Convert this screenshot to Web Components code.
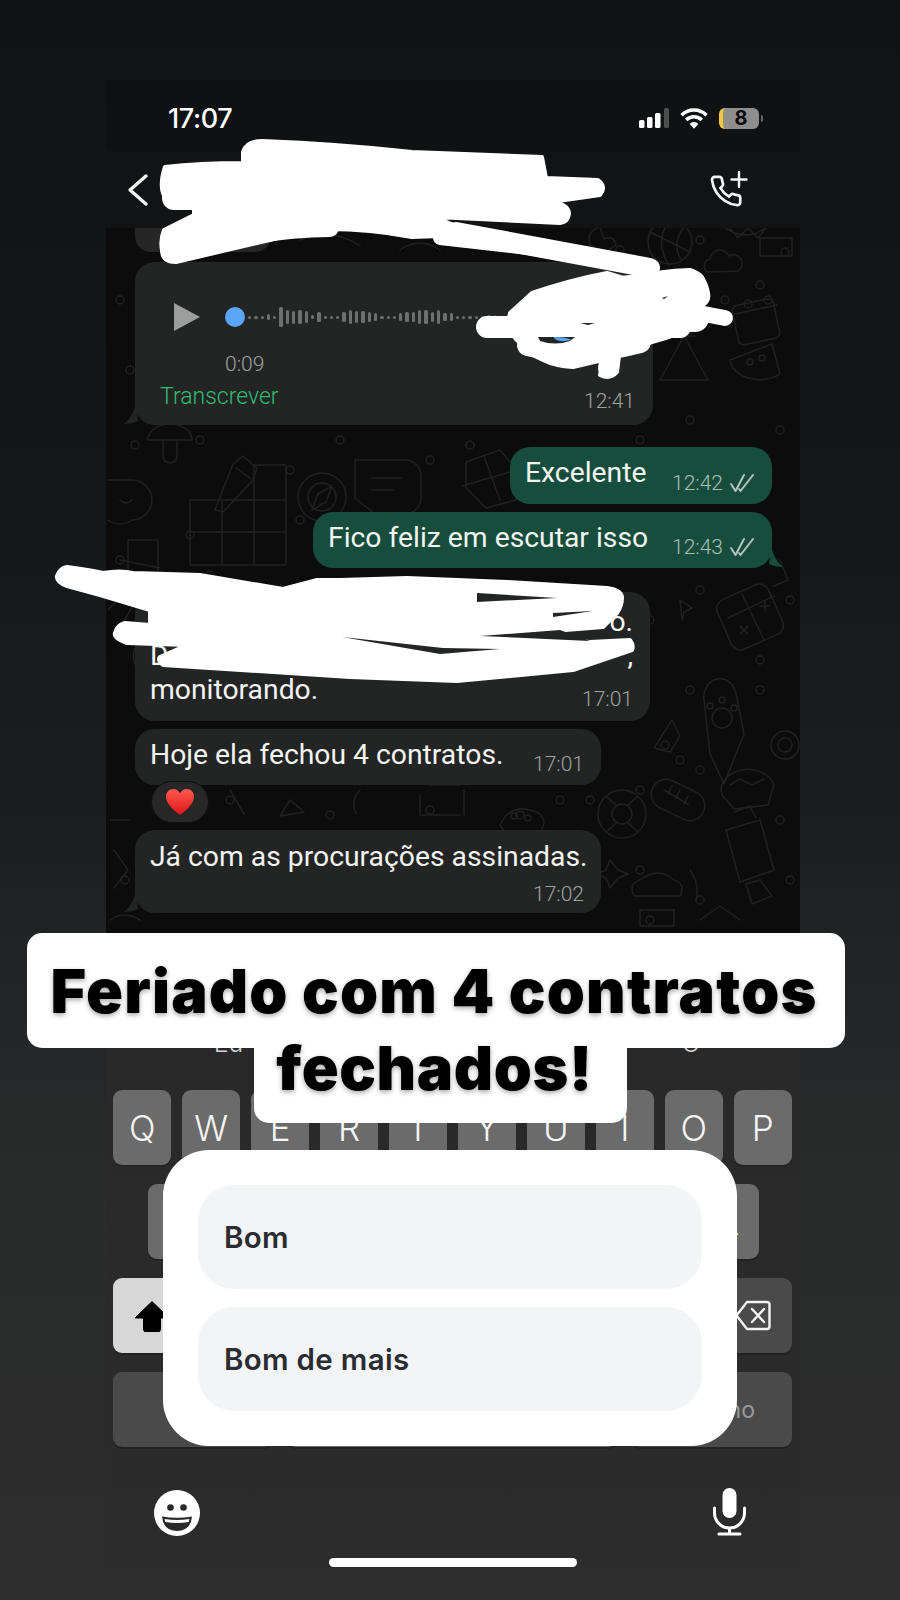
<!DOCTYPE html>
<html lang="pt-BR">
<head>
<meta charset="utf-8">
<title>Feriado com 4 contratos fechados</title>
<style>
    html, body { margin: 0; background: #101314; }
    story-page { font-family: Inter, "Liberation Sans", sans-serif; }
</style>
</head>
<body>
<story-page>
    <phone-screen>
        <status-bar time="17:07"></status-bar>
        <chat-header></chat-header>
        <chat-view>
            <div class="stub" style="flex:none;width:136px;height:24px;background:#262626;border-radius:0 0 16px 16px"></div>
            <audio-bubble time="12:41" duration="0:09" action="Transcrever" style="margin-top:10px"></audio-bubble>
            <chat-bubble out time="12:42" style="margin-top:22px;width:262px;--h:57px">Excelente</chat-bubble>
            <chat-bubble out tail time="12:43" style="margin-top:8px;width:459px">Fico feliz em escutar isso</chat-bubble>
            <chat-bubble stacked time="17:01" style="margin-top:24px;width:515px;--top:13px;--mt:-18px;--bot:12px">
                <div style="display:flex;justify-content:space-between;height:34px"><span>Ho</span><span>o.</span></div>
                <div style="display:flex;justify-content:space-between;height:34px"><span>D</span><span style="margin-left:290px">porqu</span><span>,</span></div>
                <div style="height:34px">monitorando.</div>
            </chat-bubble>
            <chat-bubble time="17:01" style="margin-top:8px;width:466px">Hoje ela fechou 4 contratos.</chat-bubble>
            <heart-reaction></heart-reaction>
            <chat-bubble stacked tail time="17:02" style="width:466px;--top:10px;--mt:10px;--bot:9px">Já com as procurações assinadas.</chat-bubble>
        </chat-view>
        <ios-keyboard></ios-keyboard>
    </phone-screen>
    <scribble-layer></scribble-layer>
    <story-sticker first="Feriado com 4 contratos" second="fechados!"></story-sticker>
    <poll-card>
        <poll-option>Bom</poll-option>
        <poll-option>Bom de mais</poll-option>
    </poll-card>
</story-page>

<script>
class StoryPage extends HTMLElement {
    constructor() {
        super();
        this.attachShadow({mode: 'open'}).innerHTML = `
            <style>
                :host {
                    display: block;
                    position: relative;
                    width: 900px;
                    height: 1600px;
                    overflow: hidden;
                    background: linear-gradient(#101314 0, #15181a 500px, #1b1d1e 800px, #242526 1000px, #2a2b2b 1200px, #2d2d2d 1600px);
                }
            </style>
            <slot></slot>`;
    }
}

class PhoneScreen extends HTMLElement {
    constructor() {
        super();
        this.attachShadow({mode: 'open'}).innerHTML = `
            <style>
                :host {
                    display: block;
                    width: 694px;
                    margin-left: 106px;
                    padding-top: 80px;
                }
            </style>
            <slot></slot>`;
    }
}

class StatusBar extends HTMLElement {
    constructor() {
        super();
        this.attachShadow({mode: 'open'}).innerHTML = `
            <style>
                :host {
                    display: flex;
                    align-items: center;
                    justify-content: space-between;
                    box-sizing: border-box;
                    height: 70px;
                    padding: 0 37px 0 62px;
                    background: #0f1112;
                    color: #fff;
                }
                .time { font-size: 27px; font-weight: 500; letter-spacing: -.4px; margin-top: 6px; }
                .icons { display: flex; align-items: center; gap: 11px; margin-top: 6px; }
                svg { display: block; }
                .batt { display: flex; align-items: center; gap: 2px; }
                .cell {
                    box-sizing: border-box;
                    width: 40px;
                    height: 21px;
                    border-radius: 6px;
                    border-left: 4px solid #f2c93b;
                    background: #8e8e8e;
                    color: #0a0a0a;
                    font-size: 20px;
                    font-weight: 700;
                    line-height: 21px;
                    text-align: center;
                }
                .nub { width: 2px; height: 7px; background: #666; border-radius: 0 2px 2px 0; }
            </style>
            <span class="time">${this.getAttribute('time')}</span>
            <div class="icons">
                <svg width="30" height="20" viewBox="0 0 30 20">
                    <rect x="0" y="12" width="5.500" height="8" rx="1.500" fill="#fff"/>
                    <rect x="8" y="9" width="5.500" height="11" rx="1.500" fill="#fff"/>
                    <rect x="16" y="5" width="5.500" height="15" rx="1.500" fill="#fff"/>
                    <rect x="25" y="0" width="5" height="20" rx="1.500" fill="#4d4f4f"/>
                </svg>
                <svg width="28" height="21" viewBox="0 0 27 20" fill="none" stroke="#fff" stroke-width="3.400">
                    <path d="M1.500 6.800a17 17 0 0 1 24 0"/>
                    <path d="M6 11.400a10.600 10.600 0 0 1 15 0"/>
                    <path d="M13.500 19.800l-4.200-4.600a6 6 0 0 1 8.400 0z" fill="#fff" stroke="none"/>
                </svg>
                <div class="batt"><div class="cell">8</div><div class="nub"></div></div>
            </div>`;
    }
}

class ChatHeader extends HTMLElement {
    constructor() {
        super();
        this.attachShadow({mode: 'open'}).innerHTML = `
            <style>
                :host {
                    display: flex;
                    align-items: flex-start;
                    justify-content: space-between;
                    box-sizing: border-box;
                    height: 78px;
                    padding: 21px 52px 0 21px;
                    background: #111314;
                }
                svg { display: block; }
            </style>
            <svg width="22" height="34" viewBox="0 0 22 34" fill="none" stroke="#f4f4f4" stroke-width="3.400" stroke-linecap="round" stroke-linejoin="round" style="margin-top:2px">
                <path d="M19 3L3 17l16 14"/>
            </svg>
            <svg width="38" height="38" viewBox="0 0 38 38" fill="none" stroke="#f4f4f4" stroke-width="2.400" stroke-linecap="round">
                <g transform="translate(-1 3) scale(1.42)">
                    <path stroke-width="1.900" d="M22 16.920v3a2 2 0 0 1-2.180 2 19.790 19.790 0 0 1-8.630-3.070 19.500 19.500 0 0 1-6-6 19.790 19.790 0 0 1-3.070-8.670A2 2 0 0 1 4.110 2h3a2 2 0 0 1 2 1.720 12.840 12.840 0 0 0 .7 2.810 2 2 0 0 1-.45 2.110L8.090 9.910a16 16 0 0 0 6 6l1.270-1.270a2 2 0 0 1 2.110-.45 12.840 12.840 0 0 0 2.810.7A2 2 0 0 1 22 16.920z"/>
                </g>
                <path d="M29 1v15M21.500 8.500h15"/>
            </svg>`;
    }
}

class ChatView extends HTMLElement {
    constructor() {
        super();
        // small dots and doodles of the wallpaper, in page coordinates
        const dots = [[150,240],[620,250],[700,240],[785,252],[665,300],[725,300],[690,330],[760,285],[130,370],[120,300],[690,420],[780,430],[640,440],
            [135,445],[200,440],[340,440],[430,460],[470,445],[120,560],[190,535],[210,575],[300,520],[290,470],[650,620],[655,560],[700,590],[790,600],[760,660],
            [690,690],[760,690],[665,745],[680,760],[700,770],[640,790],[230,800],[330,815],[430,810],[520,815],[590,800],[560,800],[780,820],[790,880],[640,870],[700,900],[650,920],[125,880]];
        const grid = [];
        for (let i = 0; i <= 3; i++) grid.push(`M${190 + i * 32} 500V565`);
        grid.push('M190 500H286M190 532H286M190 565H286M254 465H286V500M254 465V500');
        this.attachShadow({mode: 'open'}).innerHTML = `
            <style>
                :host {
                    display: flex;
                    flex-direction: column;
                    align-items: flex-start;
                    position: relative;
                    box-sizing: border-box;
                    height: 705px;
                    padding: 0 28px 0 29px;
                    background: #0c0c0c;
                    overflow: hidden;
                }
                svg { position: absolute; left: 0; top: 0; }
                ::slotted(*) { position: relative; }
            </style>
            <svg width="694" height="705" viewBox="106 228 694 705" fill="none" stroke="#212121" stroke-width="1.500" stroke-linecap="round" stroke-linejoin="round">
                ${dots.map(d => `<circle cx="${d[0]}" cy="${d[1]}" r="4"/>`).join('')}
                <circle cx="670" cy="242" r="22"/><path d="M650 232q20 10 40 20M670 220q-16 20-2 44M685 226q-14 16-4 34"/>
                <path d="M708 272a7 7 0 0 1 2-13 10 10 0 0 1 19-3 8 8 0 0 1 9 15z"/>
                <path d="M725 228q24 14 40 0M730 228l8 10 10-10 10 10 8-10"/>
                <rect x="735" y="302" width="42" height="40" rx="5" transform="rotate(-12 755 322)"/><path d="M735 314l42-9"/><circle cx="748" cy="304" r="4"/><circle cx="768" cy="300" r="4"/>
                <path d="M660 380l24-44 24 44zM672 336h24"/>
                <path d="M730 360a30 22 0 0 0 50 14l-8-30z"/><circle cx="750" cy="362" r="3"/><circle cx="762" cy="358" r="3"/>
                <path d="M760 238h32v18h-32z"/>
                <path d="M148 440h44a22 16 0 0 0-44 0zM163 440v16a7 7 0 0 0 14 0v-16"/>
                <path d="M215 510l18-46 10-8 14 12-4 12-30 32zM236 468l14 10"/>
                <path d="M108 480h24a20 20 0 0 1 0 40 20 20 0 0 1-24 0"/><path d="M120 500q6 6 12 0"/>
                <path d="${grid.join('')}"/>
                <path d="M120 560l40 8M108 610l14-14 12 8-12 20M150 590q20-6 30 10"/>
                <circle cx="322" cy="497" r="24"/><circle cx="322" cy="497" r="14"/><path d="M332 486l-14 8-6 16 14-8z"/>
                <path d="M355 460h50a16 16 0 0 1 16 16v22a16 16 0 0 1-16 16h-30l-20-16z"/><path d="M372 478h30M372 490h22"/>
                <path d="M466 462l34-12 24 28-8 22-30 8-20-20z"/><path d="M484 456l16 44M462 486l48-14"/>
                <path d="M168 670a20 20 0 1 0-1 1zM128 540h30v34h-30z"/>
                <rect x="722" y="590" width="56" height="54" rx="10" transform="rotate(-24 750 617)"/><path d="M728 618l46-22M742 594l22 46M760 606h10M765 601v10M740 626l8 8M748 626l-8 8"/>
                <path d="M680 600l12 8-8 4-2 8z"/>
                <path d="M704 700a16 18 0 0 1 32-6l8 40-20 50-14-30z"/><circle cx="722" cy="718" r="10"/><circle cx="710" cy="706" r="3"/><circle cx="722" cy="700" r="3"/><circle cx="734" cy="708" r="3"/>
                <circle cx="785" cy="745" r="14"/><circle cx="785" cy="745" r="7"/>
                <rect x="650" y="785" width="56" height="30" rx="15" transform="rotate(26 678 800)"/><path d="M664 790l24 14M672 786l-4 8M680 790l-4 8M688 796l-4 8"/>
                <path d="M722 795a26 20 0 0 1 52-10l-6 20-34 4z"/><path d="M730 785l10-6 12 6 12-6"/>
                <path d="M672 720l8 16-10 16-16-4z"/>
                <circle cx="622" cy="814" r="24"/><circle cx="622" cy="814" r="10"/><path d="M606 796l10 9M638 796l-10 9M606 832l10-9M638 832l-10-9"/>
                <path d="M726 830l34-10 14 50-34 12zM734 812l16-6 6 12"/>
                <path d="M500 825q10-22 34-14 16 6 6 22-34 6-40-8z"/><circle cx="514" cy="816" r="3"/><circle cx="528" cy="818" r="3"/>
                <path d="M420 795v20h40M430 785h30M464 790v25"/>
                <path d="M640 880q18-14 34 0 12 4 6 16h-46q-6-12 6-16zM690 870q10 14 6 30M760 880l12 16-20 8-6-20z"/>
                <path d="M610 860l8 10 10 4-10 4-8 10-4-10-10-4 10-4z"/>
                <path d="M290 800l-10 16 24-4zM230 790l14 24M360 790q-10 10-4 24"/>
                <path d="M640 910h34v16h-34zM700 920l20-14 20 14"/>
                <path d="M560 460l12 10-8 16M620 690l22 20M640 704l-10 14M780 560l8 20-14 6"/>
                <path d="M590 245q-4-14 10-18l4 12q10-4 12 6l-12 8z"/>
                <path d="M110 820h20M114 850l14 20-14 18M110 920q14-10 30 0"/>
                <path d="M300 240q30-14 60 6M400 250q20-14 40 0M480 240l24 8"/>
            </svg>
            <slot></slot>`;
    }
}

class ChatBubble extends HTMLElement {
    constructor() {
        super();
        const out = this.hasAttribute('out');
        const ticks = out ? `<svg width="26" height="20" viewBox="0 0 26 20" fill="none" stroke="#b4c5bd" stroke-width="2" stroke-linecap="round" stroke-linejoin="round">
                <path d="M2 11l4.500 7L15 2M10 16l1.500 2L24 2"/></svg>` : '';
        const tail = !this.hasAttribute('tail') ? '' : out
            ? `<svg class="tail" style="right:-11px" width="14" height="22" viewBox="0 0 14 22"><path d="M2 0Q5 14 14 21Q6 21 0 18z" fill="#174d3c"/></svg>`
            : `<svg class="tail" style="left:-11px" width="14" height="22" viewBox="0 0 14 22"><path d="M12 0Q9 14 0 21Q8 21 14 18z" fill="#232524"/></svg>`;
        this.attachShadow({mode: 'open'}).innerHTML = `
            <style>
                :host {
                    display: block;
                    flex: none;
                    box-sizing: border-box;
                    font-family: Roboto, "Liberation Sans", sans-serif;
                    font-size: 28.300px;
                    color: #f4f4f2;
                    --bg: #232524;
                    --meta: #a0a2a1;
                }
                :host([out]) {
                    align-self: flex-end;
                    --bg: #174d3c;
                    --meta: #a8beb5;
                }
                .b {
                    position: relative;
                    display: flex;
                    align-items: flex-end;
                    justify-content: space-between;
                    box-sizing: border-box;
                    min-height: var(--h, 56px);
                    padding: 9px 17px 11px 15px;
                    background: var(--bg);
                    border-radius: 20px;
                    line-height: 34px;
                    white-space: nowrap;
                }
                :host([stacked]) .b { display: block; padding: var(--top) 17px var(--bot) 15px; }
                :host([stacked]) .meta { justify-content: flex-end; margin-top: var(--mt); }
                .text { align-self: flex-start; }
                .meta {
                    display: flex;
                    align-items: center;
                    gap: 6px;
                    font-size: 21px;
                    font-weight: 300;
                    line-height: 20px;
                    color: var(--meta);
                }
                .tail { position: absolute; bottom: 0; }
            </style>
            <div class="b">
                <div class="text"><slot></slot></div>
                <div class="meta"><span>${this.getAttribute('time')}</span>${ticks}</div>
                ${tail}
            </div>`;
    }
}

class AudioBubble extends HTMLElement {
    constructor() {
        super();
        const bars = [3,3,3,6,3,20,14,13,14,12,4,10,3,3,3,10,14,12,12,10,8,3,3,3,8,10,10,14,14,10,14,8,8,3,3,3,3,3,4,4];
        this.attachShadow({mode: 'open'}).innerHTML = `
            <style>
                :host {
                    display: block;
                    flex: none;
                    box-sizing: border-box;
                    position: relative;
                    width: 518px;
                    height: 163px;
                    padding-top: 41px;
                    background: #232524;
                    border-radius: 20px;
                    color: #a0a2a1;
                    font-family: Roboto, "Liberation Sans", sans-serif;
                }
                .row { display: flex; align-items: center; height: 28px; padding-left: 39px; }
                .dot { width: 20px; height: 20px; border-radius: 50%; background: #5aa5f5; margin: 0 3px 0 25px; flex: none; }
                .wave { display: flex; align-items: center; gap: 3px; }
                .wave i { display: block; width: 3.300px; background: #6e706f; border-radius: 1.500px; }
                .dur { margin: 23px 0 0 90px; font-size: 21px; font-weight: 300; line-height: 20px; }
                .foot { display: flex; justify-content: space-between; align-items: flex-end; padding: 0 18px 0 25px; margin-top: 9px; }
                .act { color: #2fbb74; font-size: 23px; font-weight: 300; line-height: 28px; }
                .time { font-size: 21px; font-weight: 300; line-height: 20px; margin-bottom: 0; }
                .tail { position: absolute; left: -11px; bottom: 0; }
            </style>
            <div class="row">
                <svg width="26" height="28" viewBox="0 0 26 28"><path d="M0 0l26 14L0 28z" fill="#9d9d9d"/></svg>
                <div class="dot"></div>
                <div class="wave">${bars.map(h => `<i style="height:${h}px"></i>`).join('')}</div>
            </div>
            <div class="dur">${this.getAttribute('duration')}</div>
            <div class="foot">
                <span class="act">${this.getAttribute('action')}</span>
                <span class="time">${this.getAttribute('time')}</span>
            </div>
            <svg class="tail" width="14" height="22" viewBox="0 0 14 22"><path d="M12 0Q9 14 0 21Q8 21 14 18z" fill="#232524"/></svg>`;
    }
}

class HeartReaction extends HTMLElement {
    constructor() {
        super();
        this.attachShadow({mode: 'open'}).innerHTML = `
            <style>
                :host {
                    display: flex;
                    align-items: center;
                    justify-content: center;
                    box-sizing: border-box;
                    flex: none;
                    width: 58px;
                    height: 42px;
                    margin: -4px 0 7px 16px;
                    background: #272727;
                    border: 1px solid #111;
                    border-radius: 21px;
                    z-index: 1;
                }
            </style>
            <svg width="28" height="26" viewBox="0 0 28 26">
                <defs><linearGradient id="h" x1="0" y1="0" x2="0" y2="1"><stop offset="0" stop-color="#ff5a4d"/><stop offset="1" stop-color="#e0141c"/></linearGradient></defs>
                <path d="M14 26C6 20 0 14 0 7.500 0 3 3.400 0 7.200 0 10 0 12.600 1.500 14 4.200 15.400 1.500 18 0 20.800 0 24.600 0 28 3 28 7.500 28 14 22 20 14 26z" fill="url(#h)"/>
            </svg>`;
    }
}

class IosKey extends HTMLElement {
    constructor() {
        super();
        this.attachShadow({mode: 'open'}).innerHTML = `
            <style>
                :host {
                    display: flex;
                    align-items: center;
                    justify-content: center;
                    flex: 1;
                    height: 75px;
                    border-radius: 9px;
                    background: #6b6b6b;
                    box-shadow: 0 2px 0 #222;
                    color: #f5f5f5;
                    font-size: 35px;
                    font-weight: 300;
                }
                :host([dark]) { background: #4a4a4a; }
                :host([light]) { background: #d7d7d7; }
            </style>
            <slot></slot>`;
    }
}

class IosKeyboard extends HTMLElement {
    constructor() {
        super();
        const keys = list => list.split('').map(k => `<ios-key>${k}</ios-key>`).join('');
        this.attachShadow({mode: 'open'}).innerHTML = `
            <style>
                :host {
                    display: block;
                    box-sizing: border-box;
                    height: 637px;
                    background: linear-gradient(#282828, #2c2c2c);
                    color: #cfcfcf;
                }
                .sugg { display: grid; grid-template-columns: 231px 231px 232px; height: 157px; padding-left: 7px; box-sizing: border-box; font-size: 25px; font-weight: 300; text-align: center; align-items: end; }
                .sugg span { padding-bottom: 32px; color: #d4d4d4; }
                .row { display: flex; gap: 10.600px; padding: 0 8px 0 7px; margin-bottom: 19px; }
                .row.two { padding: 0 41px 0 42px; }
                .row.three ios-key.side { flex: none; width: 78px; }
                .row.four { margin-bottom: 0; gap: 14px; }
                .n123 { flex: none; width: 160px; }
                .ret { flex: none; width: 161px; justify-content: flex-end; }
                .ret span { font-size: 23px; font-weight: 400; color: #9a9a9a; padding-right: 37px; }
                .tools { display: flex; justify-content: space-between; align-items: flex-start; height: 48px; margin-top: 41px; padding: 0 54px 0 48px; }
                .home { width: 248px; height: 9px; margin: 22px auto 0; background: #fff; border-radius: 5px; }
                svg { display: block; }
            </style>
            <div class="sugg"><span>Eu</span><span></span><span>O</span></div>
            <div class="row">${keys('QWERTYUIOP')}</div>
            <div class="row two">${keys('ASDFGHJKL')}</div>
            <div class="row three">
                <ios-key class="side" light>
                    <svg width="36" height="32" viewBox="0 0 36 32"><path d="M18 1.500L35 18h-8.500v11a3 3 0 0 1-3 3h-11a3 3 0 0 1-3-3V18H1z" fill="#000" stroke="#000" stroke-linejoin="round"/></svg>
                </ios-key>
                ${keys('ZXCVBNM')}
                <ios-key class="side" dark>
                    <svg width="36" height="31" viewBox="0 0 36 31" fill="none" stroke="#f4f4f4" stroke-width="2.400" stroke-linejoin="round" stroke-linecap="round">
                        <path d="M1.500 15.500L12 2h20a2.500 2.500 0 0 1 2.500 2.500v22a2.500 2.500 0 0 1-2.500 2.500H12z"/>
                        <path d="M17 9l12 13M29 9L17 22"/>
                    </svg>
                </ios-key>
            </div>
            <div class="row four">
                <ios-key class="n123" dark></ios-key>
                <ios-key></ios-key>
                <ios-key class="ret" dark><span>retorno</span></ios-key>
            </div>
            <div class="tools">
                <svg width="46" height="46" viewBox="0 0 46 46" style="margin-top:2px">
                    <circle cx="23" cy="23" r="23" fill="#fff"/>
                    <circle cx="16.500" cy="17.500" r="3.300" fill="#2a2a2a"/>
                    <circle cx="29.500" cy="17.500" r="3.300" fill="#2a2a2a"/>
                    <path d="M8 26.500q15 2.500 30 0q-1 14-15 14.500q-14-.5-15-14.500z" fill="#2a2a2a"/>
                    <path d="M10.500 29q12.500 2 25 0l-.8 3q-11.700 1.800-23.400 0z" fill="#fff"/>
                </svg>
                <svg width="33" height="48" viewBox="0 0 33 48" fill="none" stroke="#fff" stroke-width="3" stroke-linecap="round">
                    <rect x="9.500" y="0" width="14" height="30" rx="7" fill="#fff" stroke="none"/>
                    <path d="M1.500 20v5a15 15 0 0 0 30 0v-5M16.500 40v6M6 46h21"/>
                </svg>
            </div>
            <div class="home"></div>`;
    }
}

class ScribbleLayer extends HTMLElement {
    constructor() {
        super();
        this.attachShadow({mode: 'open'}).innerHTML = `
            <style>
                :host { display: block; position: absolute; left: 0; top: 0; width: 900px; height: 1600px; pointer-events: none; }
                svg { display: block; }
            </style>
            <svg width="900" height="1600" viewBox="0 0 900 1600">
                <g fill="#fff" stroke="#fff" stroke-width="4" stroke-linejoin="round">
                    <path d="M243 152Q246 141 262 141Q340 144 412 152L542 157L546 178L598 180Q607 187 600 195L551 202Q569 204 569 214Q568 222 560 223L435 217L470 232L440 236L412 237Q370 229 328 229Q300 232 270 240L176 262Q162 262 162 250Q160 240 164 230L194 215V203L166 199Q158 188 165 167Q200 163 243 163Z"/>
                    <path d="M532 293Q570 280 607 273L630 280Q660 270 690 270Q705 275 708 293Q710 302 700 307L680 333Q650 345 620 348L617 372Q610 380 600 375L603 360L573 367Q555 366 543 360Q525 352 520 343Q505 330 510 313Z"/>
                    <path d="M67 567Q90 570 103 573Q120 570 133 573L200 575L283 589L317 580L340 580L407 578L507 582L607 588Q622 590 622 598Q622 606 617 613L603 627L540 632L480 636L590 642L630 640Q634 645 632 650L573 670L457 681L350 677L163 665Q157 660 160 657L187 645L127 643Q113 638 115 633Q117 625 125 623L150 625V610L100 595L67 586Q56 582 57 576Q60 568 67 567Z"/>
                </g>
                <g fill="none" stroke="#fff" stroke-linecap="round">
                    <path d="M456 232L650 268" stroke-width="20"/>
                    <path d="M440 238L545 250" stroke-width="14"/>
                    <path d="M487 327H680" stroke-width="22"/>
                    <path d="M667 307L725 318" stroke-width="16"/>
                    <path d="M178 180H400" stroke-width="26"/>
                    <path d="M174 198H300" stroke-width="24"/>
                    <path d="M258 153Q340 154 420 163" stroke-width="22"/>
                    <path d="M172 242Q280 215 400 218" stroke-width="22"/>
                    <path d="M174 254Q260 228 330 228" stroke-width="18"/>
                    <path d="M550 305Q620 286 692 284" stroke-width="28"/>
                    <path d="M530 318H695" stroke-width="28"/>
                    <path d="M528 345Q580 358 640 342" stroke-width="22"/>
                    <path d="M608 368L612 348" stroke-width="20"/>
                </g>
                <path d="M477 593L557 598L477 602Z" fill="#232524"/>
                <path d="M553 613L593 611L553 617Z" fill="#232524"/>
                <path d="M480 636L560 630L590 641Z" fill="#232524"/>
                <path d="M342 637L443 648L500 649L440 654Z" fill="#232524"/>
                <path d="M662 298L668 296L664 299Z" fill="#111"/>
                <path d="M580 323H595L588 325Z" fill="#232524"/>
                <path d="M538 337H575L570 341Q555 346 540 341Z" fill="#232524"/>
                <path d="M554 338Q558 343 572 340Q566 337 554 337Z" fill="#5aa5f5"/>
            </svg>`;
    }
}

class StorySticker extends HTMLElement {
    constructor() {
        super();
        this.attachShadow({mode: 'open'}).innerHTML = `
            <style>
                :host {
                    display: block;
                    position: absolute;
                    left: 27px;
                    top: 933px;
                    width: 818px;
                    color: #000;
                    font-weight: 900;
                    font-size: 61px;
                    letter-spacing: 1.200px;
                    white-space: nowrap;
                    text-shadow: 0 2px 5px rgba(0,0,0,.35);
                }
                .one, .two { display: flex; align-items: center; justify-content: center; background: #fff; }
                .one { height: 115px; border-radius: 15px; padding-right: 4px; position: relative; }
                .two { height: 75px; width: 373px; margin-left: 227px; border-radius: 0 0 15px 15px; padding-right: 12px; box-sizing: border-box; position: relative; letter-spacing: .6px; }
                .two span { margin-top: -36px; }
            </style>
            <div class="one"><span>${this.getAttribute('first')}</span></div>
            <div class="two"><span>${this.getAttribute('second')}</span></div>`;
    }
}

class PollCard extends HTMLElement {
    constructor() {
        super();
        this.attachShadow({mode: 'open'}).innerHTML = `
            <style>
                :host {
                    display: flex;
                    flex-direction: column;
                    gap: 18px;
                    position: absolute;
                    left: 163px;
                    top: 1150px;
                    box-sizing: border-box;
                    width: 574px;
                    height: 296px;
                    padding: 35px 35px 0 35px;
                    background: #fff;
                    border-radius: 46px;
                }
            </style>
            <slot></slot>`;
    }
}

class PollOption extends HTMLElement {
    constructor() {
        super();
        this.attachShadow({mode: 'open'}).innerHTML = `
            <style>
                :host {
                    display: flex;
                    align-items: center;
                    box-sizing: border-box;
                    height: 104px;
                    padding-left: 26px;
                    background: #f3f4f6;
                    border-radius: 36px;
                    color: #2b2c31;
                    font-size: 29.500px;
                    font-weight: 600;
                    letter-spacing: .3px;
                }
            </style>
            <slot></slot>`;
    }
}

customElements.define('story-page', StoryPage);
customElements.define('phone-screen', PhoneScreen);
customElements.define('status-bar', StatusBar);
customElements.define('chat-header', ChatHeader);
customElements.define('chat-view', ChatView);
customElements.define('chat-bubble', ChatBubble);
customElements.define('audio-bubble', AudioBubble);
customElements.define('heart-reaction', HeartReaction);
customElements.define('ios-key', IosKey);
customElements.define('ios-keyboard', IosKeyboard);
customElements.define('scribble-layer', ScribbleLayer);
customElements.define('story-sticker', StorySticker);
customElements.define('poll-card', PollCard);
customElements.define('poll-option', PollOption);
</script>
</body>
</html>
